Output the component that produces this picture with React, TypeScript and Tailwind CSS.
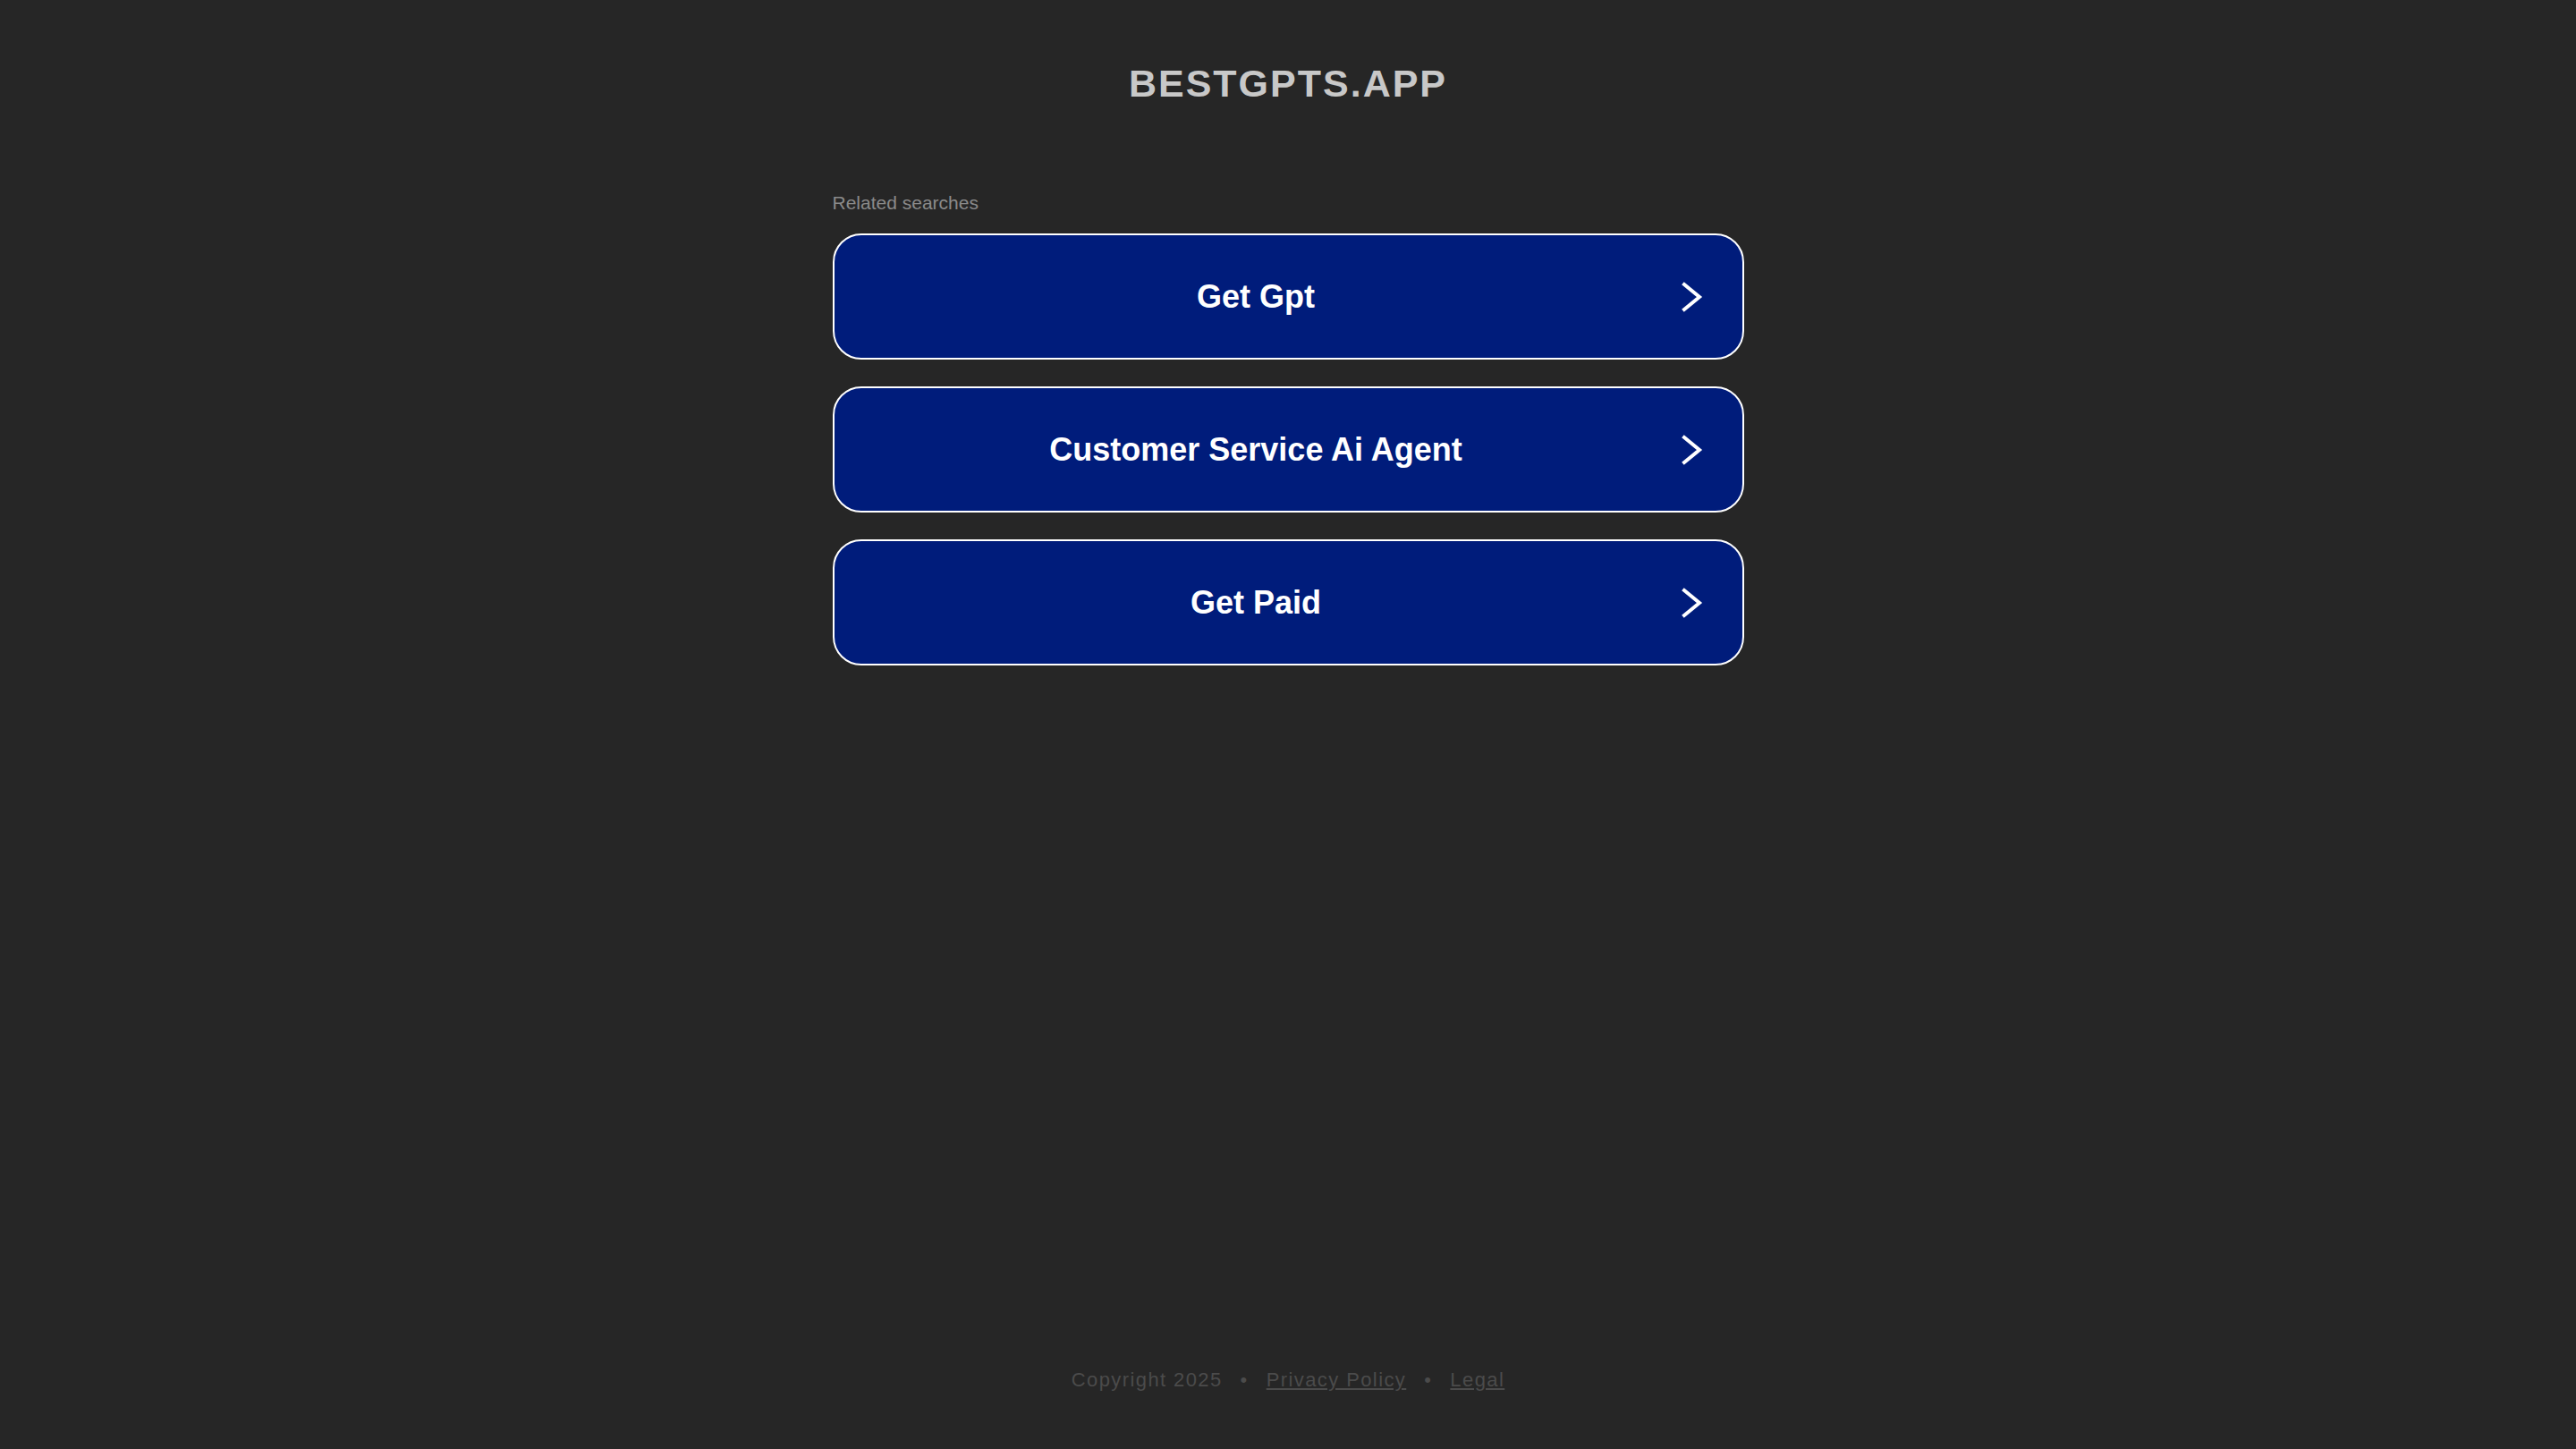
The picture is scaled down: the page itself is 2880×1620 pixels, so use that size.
import React from "react";

const searches = ["Get Gpt", "Customer Service Ai Agent", "Get Paid"];

const Chevron = () => (
  <svg width="24" height="34" viewBox="0 0 24 34" fill="none">
    <polyline
      points="3,3 20,17 3,31"
      stroke="white"
      strokeWidth="4"
      strokeLinecap="square"
      strokeLinejoin="miter"
    />
  </svg>
);

const SearchButton = ({ label }: { label: string }) => (
  <a
    href="#"
    className="flex h-[141px] items-center rounded-[32px] border-2 border-white bg-[#001c7b]"
  >
    <span className="flex-1 text-center text-[36px] font-bold leading-none text-white">
      {label}
    </span>
    <span className="flex w-[72px] items-center pl-[4px]">
      <Chevron />
    </span>
  </a>
);

export default function App() {
  return (
    <div className="flex min-h-screen flex-col items-center bg-[#262626] font-['Liberation_Sans',Arial,sans-serif]">
      <h1 className="mt-[72px] text-[43px] font-bold leading-none tracking-[2px] text-[#c8c8c8]">
        BESTGPTS.APP
      </h1>

      <section className="mt-[101px] w-[1019px]">
        <p className="text-[21px] leading-none text-[#8a8a8a]">Related searches</p>
        <div className="mt-[24px] flex flex-col gap-[30px]">
          {searches.map((s) => (
            <SearchButton key={s} label={s} />
          ))}
        </div>
      </section>

      {/* footer links */}
      <footer className="mt-auto mb-[66px] flex items-center gap-[20px] text-[22px] leading-none tracking-[1.4px] text-[#4b4b4b]">
        <span>Copyright 2025</span>
        <span>•</span>
        <a href="#" className="underline">
          Privacy Policy
        </a>
        <span>•</span>
        <a href="#" className="underline">
          Legal
        </a>
      </footer>
    </div>
  );
}
